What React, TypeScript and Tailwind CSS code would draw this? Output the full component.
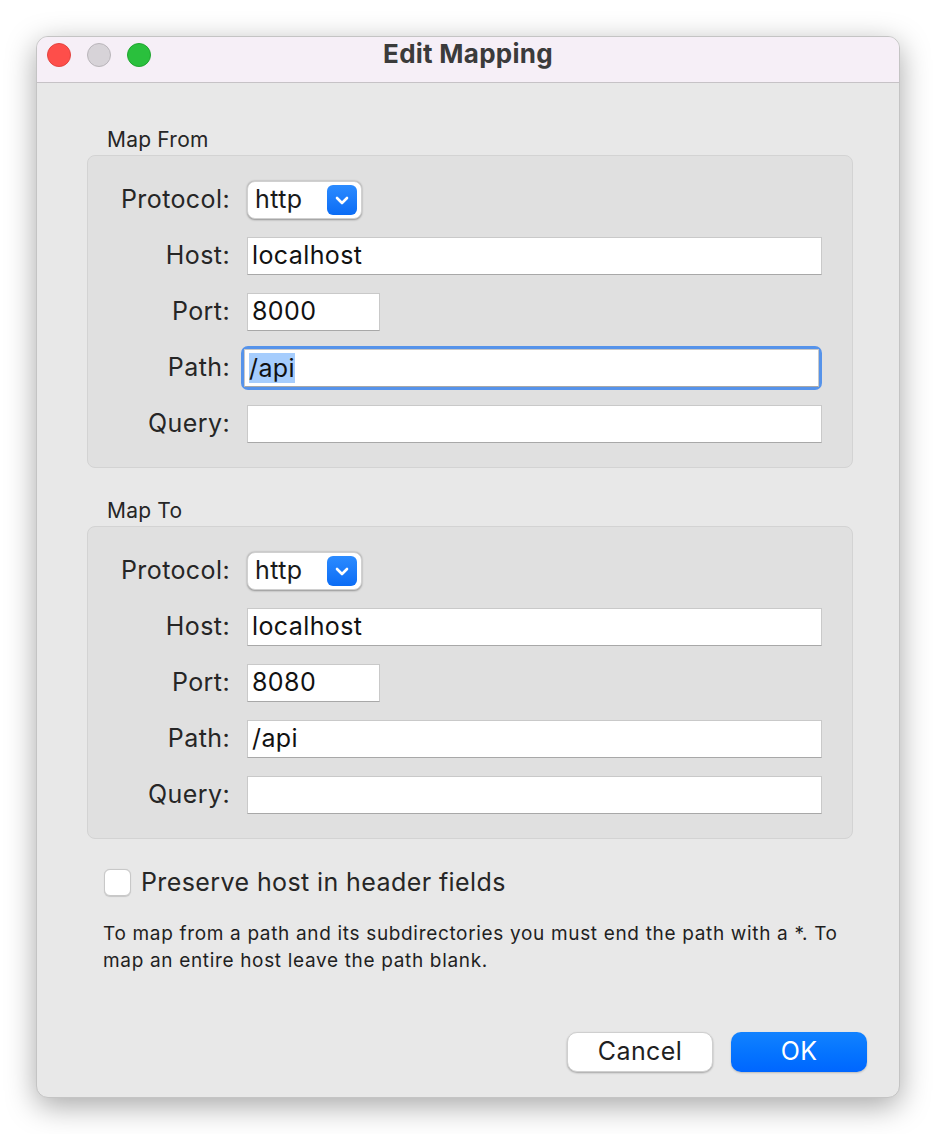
import React from "react";

const font = { fontFamily: "Inter, 'Liberation Sans', sans-serif" };

function TrafficLights() {
  return (
    <div className="absolute left-[10px] top-[6px] flex gap-[16px]">
      <span className="w-[24px] h-[24px] rounded-full bg-[#fe4e4a] border border-[#e2443f]" />
      <span className="w-[24px] h-[24px] rounded-full bg-[#d7d3d8] border border-[#b9b5ba]" />
      <span className="w-[24px] h-[24px] rounded-full bg-[#2ac03d] border border-[#20a530]" />
    </div>
  );
}

function Popup({ value }: { value: string }) {
  return (
    <div className="h-[38px] w-[115px] rounded-[8px] bg-white shadow-[0_0.5px_2px_rgba(0,0,0,0.35)] border border-[#d0d0d0] flex items-center justify-between pl-[7px] pr-[4px]">
      <span className="text-[25px] tracking-[0.016em] text-[#1a1a1a]">{value}</span>
      <span className="w-[30px] h-[30px] rounded-[6px] bg-gradient-to-b from-[#2b8bff] to-[#0a6cf5] flex items-center justify-center">
        <svg width="14" height="9" viewBox="0 0 14 9" fill="none">
          <path d="M2 2l5 5 5-5" stroke="white" strokeWidth="2.6" strokeLinecap="round" strokeLinejoin="round" />
        </svg>
      </span>
    </div>
  );
}

function Field({ value, width, focused }: { value: string; width?: string; focused?: boolean }) {
  const field = (
    <div
      className={`h-[38px] bg-white border border-[#c9c9c9] border-b-[#a8a8a8] flex items-center pl-[4px] text-[25px] tracking-[0.016em] text-[#111] ${width ?? "w-[575px]"}`}
    >
      {focused ? <span className="bg-[#a6cdfd] leading-[30px]">{value}</span> : value}
    </div>
  );
  if (focused) {
    return (
      <div className="-m-[6px] p-[3px] rounded-[7px] bg-[#5693ea]">
        <div className="rounded-[3px]">{field}</div>
      </div>
    );
  }
  return field;
}

function Row({ label, children }: { label: string; children: React.ReactNode }) {
  return (
    <div className="flex items-center h-[38px]">
      <div className="w-[142px] text-right text-[25px] tracking-[0.016em] text-[#262626]">{label}</div>
      <div className="ml-[17px] flex">{children}</div>
    </div>
  );
}

function Group({ title, port, focusPath }: { title: string; port: string; focusPath?: boolean }) {
  return (
    <div>
      <div className="ml-[20px] text-[21px] leading-[24px] tracking-[0.01em] text-[#262626] mb-[3px]">{title}</div>
      <div className="rounded-[8px] bg-[#e0e0e0] border border-[#d3d3d3] pt-[25px] pb-[24px] flex flex-col gap-[18px]">
        <Row label="Protocol:">
          <Popup value="http" />
        </Row>
        <Row label="Host:">
          <Field value="localhost" />
        </Row>
        <Row label="Port:">
          <Field value={port} width="w-[133px]" />
        </Row>
        <Row label="Path:">
          <Field value="/api" focused={focusPath} />
        </Row>
        <Row label="Query:">
          <Field value="" />
        </Row>
      </div>
    </div>
  );
}

export default function App() {
  return (
    <div className="w-[936px] h-[1134px] bg-white pt-[36px] pl-[36px]" style={font}>
      <div className="w-[864px] h-[1062px] rounded-[12px] overflow-hidden bg-[#e8e8e8] shadow-[0_8px_30px_rgba(0,0,0,0.35)] border border-[#c4c4c4] flex flex-col">
        <div className="relative h-[46px] bg-[#f6eff7] border-b border-[#c6c2c6] flex items-center justify-center pb-[12px] shrink-0">
          <TrafficLights />
          <span className="text-[26px] font-bold tracking-[0.01em] text-[#3b3b3b]">Edit Mapping</span>
        </div>
        <div className="pl-[50px] pr-[46px] pt-[45px] flex flex-col">
          <Group title="Map From" port="8000" focusPath />
          <div className="h-[31px]" />
          <Group title="Map To" port="8080" />
          <div className="mt-[25px] ml-[17px] flex items-center gap-[10px]">
            <span className="w-[27px] h-[27px] rounded-[6px] bg-white border border-[#c8c8c8] shadow-[0_0.5px_1px_rgba(0,0,0,0.15)]" />
            <span className="text-[25px] tracking-[0.016em] text-[#262626]">Preserve host in header fields</span>
          </div>
          <p className="mt-[18px] ml-[16px] text-[19px] leading-[27px] tracking-[0.035em] text-[#1f1f1f] pr-[0px]">
            To map from a path and its subdirectories you must end the path with a *. To map an entire host leave the path blank.
          </p>
          <div className="mt-[58px] flex justify-end gap-[18px] mr-[-14px]">
            <button className="w-[146px] h-[40px] rounded-[10px] bg-white border border-[#cfcfcf] shadow-[0_1px_2px_rgba(0,0,0,0.3)] text-[25px] tracking-[0.016em] text-[#1f1f1f]">
              Cancel
            </button>
            <button className="w-[136px] h-[40px] rounded-[10px] bg-gradient-to-b from-[#1282ff] to-[#0066ff] text-[25px] tracking-[0.016em] text-white shadow-[0_1px_2px_rgba(0,0,0,0.2)]">
              OK
            </button>
          </div>
        </div>
      </div>
    </div>
  );
}
